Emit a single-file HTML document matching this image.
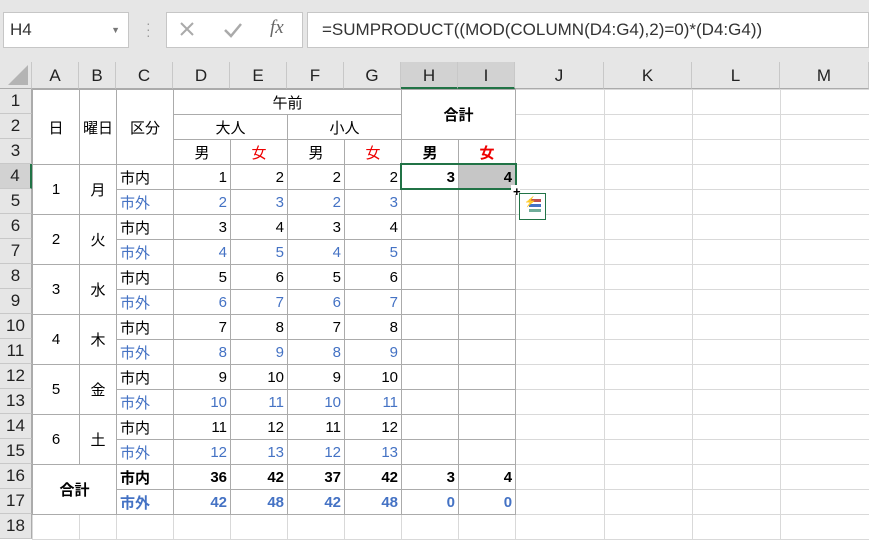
<!DOCTYPE html>
<html><head><meta charset="utf-8"><style>
*{box-sizing:border-box;margin:0;padding:0}
body{width:869px;height:538px;overflow:hidden;background:#fff;font-family:"Liberation Sans","Noto Sans CJK JP",sans-serif;position:relative}
.top{position:absolute;left:0;top:0;width:869px;height:62px;background:#e6e6e6}
.box{position:absolute;background:#fff;border:1px solid #c6c6c6}
.hdr{position:absolute;top:62px;height:27px;background:#e6e6e6;border-right:1px solid #c8c8c8;border-bottom:1px solid #ababab;font-size:17px;color:#222;text-align:center;line-height:27px}
.rh{position:absolute;left:0;width:32px;height:25px;background:#e6e6e6;border-bottom:1px solid #c8c8c8;border-right:1px solid #ababab;font-size:17px;color:#222;text-align:center;line-height:24px}
table{position:absolute;left:32px;top:89px;width:837px;border-collapse:collapse;table-layout:fixed}
td{height:25px;border:1px solid #d9d9d9;font-family:"Liberation Sans","Noto Sans CJK JP",sans-serif;font-size:15px;padding:0 3px;white-space:nowrap;overflow:hidden}
td.t{border:1px solid #ababab}
.c{text-align:center}.r{text-align:right}
.b{color:#4472c4}.red{color:#e00}.bd{font-weight:bold}
</style></head><body>
<div class="top"></div>
<div class="box" style="left:3px;top:12px;width:126px;height:36px;font-size:17px;line-height:34px;padding-left:6px;color:#333">H4<span style="position:absolute;right:8px;top:0;font-size:9px;color:#777">▼</span></div>
<div style="position:absolute;left:146px;top:20px;color:#999;font-size:14px;line-height:6px">·<br>·<br>·</div>
<div class="box" style="left:166px;top:12px;width:137px;height:36px"></div>
<svg style="position:absolute;left:178px;top:20px" width="100" height="22"><path d="M3 3L15 15M15 3L3 15" stroke="#aaa" stroke-width="2"/><path d="M47 10L53 16L63 4" stroke="#aaa" stroke-width="2.5" fill="none"/></svg>
<div style="position:absolute;left:270px;top:17px;font-size:19px;color:#666;font-style:italic;font-family:'Liberation Serif',serif">fx</div>
<div class="box" style="left:307px;top:12px;width:562px;height:36px;font-size:17px;line-height:34px;padding-left:14px;color:#333">=SUMPRODUCT((MOD(COLUMN(D4:G4),2)=0)*(D4:G4))</div>
<div class="hdr" style="left:0;width:32px"><div style="position:absolute;right:3px;bottom:3px;width:0;height:0;border-left:20px solid transparent;border-bottom:20px solid #b4b4b4"></div></div>
<div class="hdr" style="left:32px;width:47px">A</div>
<div class="hdr" style="left:79px;width:37px">B</div>
<div class="hdr" style="left:116px;width:57px">C</div>
<div class="hdr" style="left:173px;width:57px">D</div>
<div class="hdr" style="left:230px;width:57px">E</div>
<div class="hdr" style="left:287px;width:57px">F</div>
<div class="hdr" style="left:344px;width:57px">G</div>
<div class="hdr" style="left:401px;width:57px;background:#d2d2d2;border-bottom:2px solid #217346">H</div>
<div class="hdr" style="left:458px;width:57px;background:#d2d2d2;border-bottom:2px solid #217346">I</div>
<div class="hdr" style="left:515px;width:89px">J</div>
<div class="hdr" style="left:604px;width:88px">K</div>
<div class="hdr" style="left:692px;width:88px">L</div>
<div class="hdr" style="left:780px;width:89px">M</div>
<div class="rh" style="top:89px">1</div><div class="rh" style="top:114px">2</div><div class="rh" style="top:139px">3</div>
<div class="rh" style="top:164px;background:#d2d2d2;border-right:2px solid #217346">4</div>
<div class="rh" style="top:189px">5</div><div class="rh" style="top:214px">6</div><div class="rh" style="top:239px">7</div>
<div class="rh" style="top:264px">8</div><div class="rh" style="top:289px">9</div><div class="rh" style="top:314px">10</div>
<div class="rh" style="top:339px">11</div><div class="rh" style="top:364px">12</div><div class="rh" style="top:389px">13</div>
<div class="rh" style="top:414px">14</div><div class="rh" style="top:439px">15</div><div class="rh" style="top:464px">16</div>
<div class="rh" style="top:489px">17</div><div class="rh" style="top:514px">18</div>
<table>
<colgroup><col style="width:47px"><col style="width:37px"><col style="width:57px"><col style="width:57px"><col style="width:57px"><col style="width:57px"><col style="width:57px"><col style="width:57px"><col style="width:57px"><col style="width:89px"><col style="width:88px"><col style="width:88px"><col style="width:89px"></colgroup>
<tr><td class="t c" rowspan="3">日</td><td class="t c" rowspan="3">曜日</td><td class="t c" rowspan="3">区分</td><td class="t c" colspan="4">午前</td><td class="t c bd" colspan="2" rowspan="2">合計</td><td></td><td></td><td></td><td></td></tr>
<tr><td class="t c" colspan="2">大人</td><td class="t c" colspan="2">小人</td><td></td><td></td><td></td><td></td></tr>
<tr><td class="t c">男</td><td class="t c red">女</td><td class="t c">男</td><td class="t c red">女</td><td class="t c bd">男</td><td class="t c bd red">女</td><td></td><td></td><td></td><td></td></tr>
<tr><td class="t c" rowspan="2">1</td><td class="t c" rowspan="2">月</td><td class="t">市内</td><td class="t r">1</td><td class="t r">2</td><td class="t r">2</td><td class="t r">2</td><td class="t r bd">3</td><td class="t r bd" style="background:#c6c6c6">4</td><td></td><td></td><td></td><td></td></tr>
<tr><td class="t b">市外</td><td class="t r b">2</td><td class="t r b">3</td><td class="t r b">2</td><td class="t r b">3</td><td class="t"></td><td class="t"></td><td></td><td></td><td></td><td></td></tr>
<tr><td class="t c" rowspan="2">2</td><td class="t c" rowspan="2">火</td><td class="t">市内</td><td class="t r">3</td><td class="t r">4</td><td class="t r">3</td><td class="t r">4</td><td class="t"></td><td class="t"></td><td></td><td></td><td></td><td></td></tr>
<tr><td class="t b">市外</td><td class="t r b">4</td><td class="t r b">5</td><td class="t r b">4</td><td class="t r b">5</td><td class="t"></td><td class="t"></td><td></td><td></td><td></td><td></td></tr>
<tr><td class="t c" rowspan="2">3</td><td class="t c" rowspan="2">水</td><td class="t">市内</td><td class="t r">5</td><td class="t r">6</td><td class="t r">5</td><td class="t r">6</td><td class="t"></td><td class="t"></td><td></td><td></td><td></td><td></td></tr>
<tr><td class="t b">市外</td><td class="t r b">6</td><td class="t r b">7</td><td class="t r b">6</td><td class="t r b">7</td><td class="t"></td><td class="t"></td><td></td><td></td><td></td><td></td></tr>
<tr><td class="t c" rowspan="2">4</td><td class="t c" rowspan="2">木</td><td class="t">市内</td><td class="t r">7</td><td class="t r">8</td><td class="t r">7</td><td class="t r">8</td><td class="t"></td><td class="t"></td><td></td><td></td><td></td><td></td></tr>
<tr><td class="t b">市外</td><td class="t r b">8</td><td class="t r b">9</td><td class="t r b">8</td><td class="t r b">9</td><td class="t"></td><td class="t"></td><td></td><td></td><td></td><td></td></tr>
<tr><td class="t c" rowspan="2">5</td><td class="t c" rowspan="2">金</td><td class="t">市内</td><td class="t r">9</td><td class="t r">10</td><td class="t r">9</td><td class="t r">10</td><td class="t"></td><td class="t"></td><td></td><td></td><td></td><td></td></tr>
<tr><td class="t b">市外</td><td class="t r b">10</td><td class="t r b">11</td><td class="t r b">10</td><td class="t r b">11</td><td class="t"></td><td class="t"></td><td></td><td></td><td></td><td></td></tr>
<tr><td class="t c" rowspan="2">6</td><td class="t c" rowspan="2">土</td><td class="t">市内</td><td class="t r">11</td><td class="t r">12</td><td class="t r">11</td><td class="t r">12</td><td class="t"></td><td class="t"></td><td></td><td></td><td></td><td></td></tr>
<tr><td class="t b">市外</td><td class="t r b">12</td><td class="t r b">13</td><td class="t r b">12</td><td class="t r b">13</td><td class="t"></td><td class="t"></td><td></td><td></td><td></td><td></td></tr>
<tr><td class="t c bd" colspan="2" rowspan="2">合計</td><td class="t bd">市内</td><td class="t r bd">36</td><td class="t r bd">42</td><td class="t r bd">37</td><td class="t r bd">42</td><td class="t r bd">3</td><td class="t r bd">4</td><td></td><td></td><td></td><td></td></tr>
<tr><td class="t b bd">市外</td><td class="t r b bd">42</td><td class="t r b bd">48</td><td class="t r b bd">42</td><td class="t r b bd">48</td><td class="t r b bd">0</td><td class="t r b bd">0</td><td></td><td></td><td></td><td></td></tr>
<tr><td></td><td></td><td></td><td></td><td></td><td></td><td></td><td></td><td></td><td></td><td></td><td></td><td></td></tr>
</table>
<div style="position:absolute;left:400px;top:163px;width:117px;height:27px;border:2px solid #217346"></div>
<div style="position:absolute;left:511px;top:185px;width:9px;height:9px;background:#fff"></div>
<div style="position:absolute;left:513px;top:187px;font-size:13px;font-weight:bold;line-height:9px;color:#000">+</div>
<div style="position:absolute;left:519px;top:193px;width:27px;height:27px;border:1px solid #217346;background:#fff">
<div style="position:absolute;left:9px;top:5px;width:12px;height:3px;background:#c0504d"></div>
<div style="position:absolute;left:9px;top:10px;width:12px;height:3px;background:#4472c4"></div>
<div style="position:absolute;left:9px;top:15px;width:12px;height:3px;background:#70ad9a"></div>
<div style="position:absolute;left:4px;top:3px;font-size:10px;color:#f0b040">⚡</div>
</div>
</body></html>
